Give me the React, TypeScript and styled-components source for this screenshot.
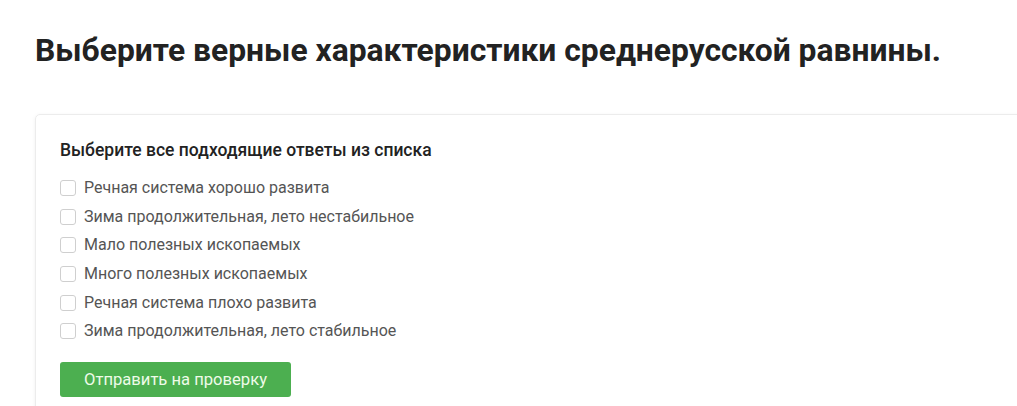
import React from 'react'
import styled, { createGlobalStyle } from 'styled-components'

const GlobalStyle = createGlobalStyle`
  html, body {
    margin: 0;
    padding: 0;
    background: #ffffff;
    font-family: Roboto, "Liberation Sans", Arial, sans-serif;
    overflow: hidden;
  }
`

const Page = styled.div`
  padding: 28px 0 0 35px;
  width: 1017px;
  height: 406px;
  box-sizing: border-box;
  overflow: hidden;
`

const Title = styled.h1`
  margin: 0 0 42px 0;
  font-size: 31.8px;
  line-height: 44px;
  font-weight: 700;
  color: #222222;
`

const Card = styled.div`
  width: 1100px;
  padding: 23px 24px 24px 24px;
  border: 1px solid #ececec;
  border-radius: 5px;
  box-shadow: 0 1px 4px rgba(0, 0, 0, 0.06);
  box-sizing: border-box;
`

const Prompt = styled.div`
  font-size: 17.5px;
  font-weight: 500;
  color: #222222;
  line-height: 24px;
  margin-bottom: 16px;
`

const Options = styled.div`
  display: flex;
  flex-direction: column;
  gap: 8.7px;
  margin-bottom: 21px;
`

const Option = styled.label`
  display: flex;
  align-items: center;
  gap: 8px;
  font-size: 16px;
  line-height: 20px;
  color: #555555;
  cursor: pointer;
`

const Box = styled.span`
  width: 14px;
  height: 14px;
  border: 1px solid #cfcfcf;
  border-radius: 3px;
  background: #ffffff;
  flex-shrink: 0;
`

const SubmitButton = styled.button`
  width: 231px;
  height: 35px;
  border: none;
  border-radius: 3px;
  background: #4caf50;
  color: #eefbe8;
  font-family: Roboto, "Liberation Sans", Arial, sans-serif;
  font-size: 16.6px;
  cursor: pointer;
`

const answers = [
  'Речная система хорошо развита',
  'Зима продолжительная, лето нестабильное',
  'Мало полезных ископаемых',
  'Много полезных ископаемых',
  'Речная система плохо развита',
  'Зима продолжительная, лето стабильное',
]

export default function App() {
  return (
    <Page>
      <GlobalStyle />
      <Title>Выберите верные характеристики среднерусской равнины.</Title>
      <Card>
        <Prompt>Выберите все подходящие ответы из списка</Prompt>
        <Options>
          {answers.map((a) => (
            <Option key={a}>
              <Box />
              {a}
            </Option>
          ))}
        </Options>
        <SubmitButton>Отправить на проверку</SubmitButton>
      </Card>
    </Page>
  )
}
